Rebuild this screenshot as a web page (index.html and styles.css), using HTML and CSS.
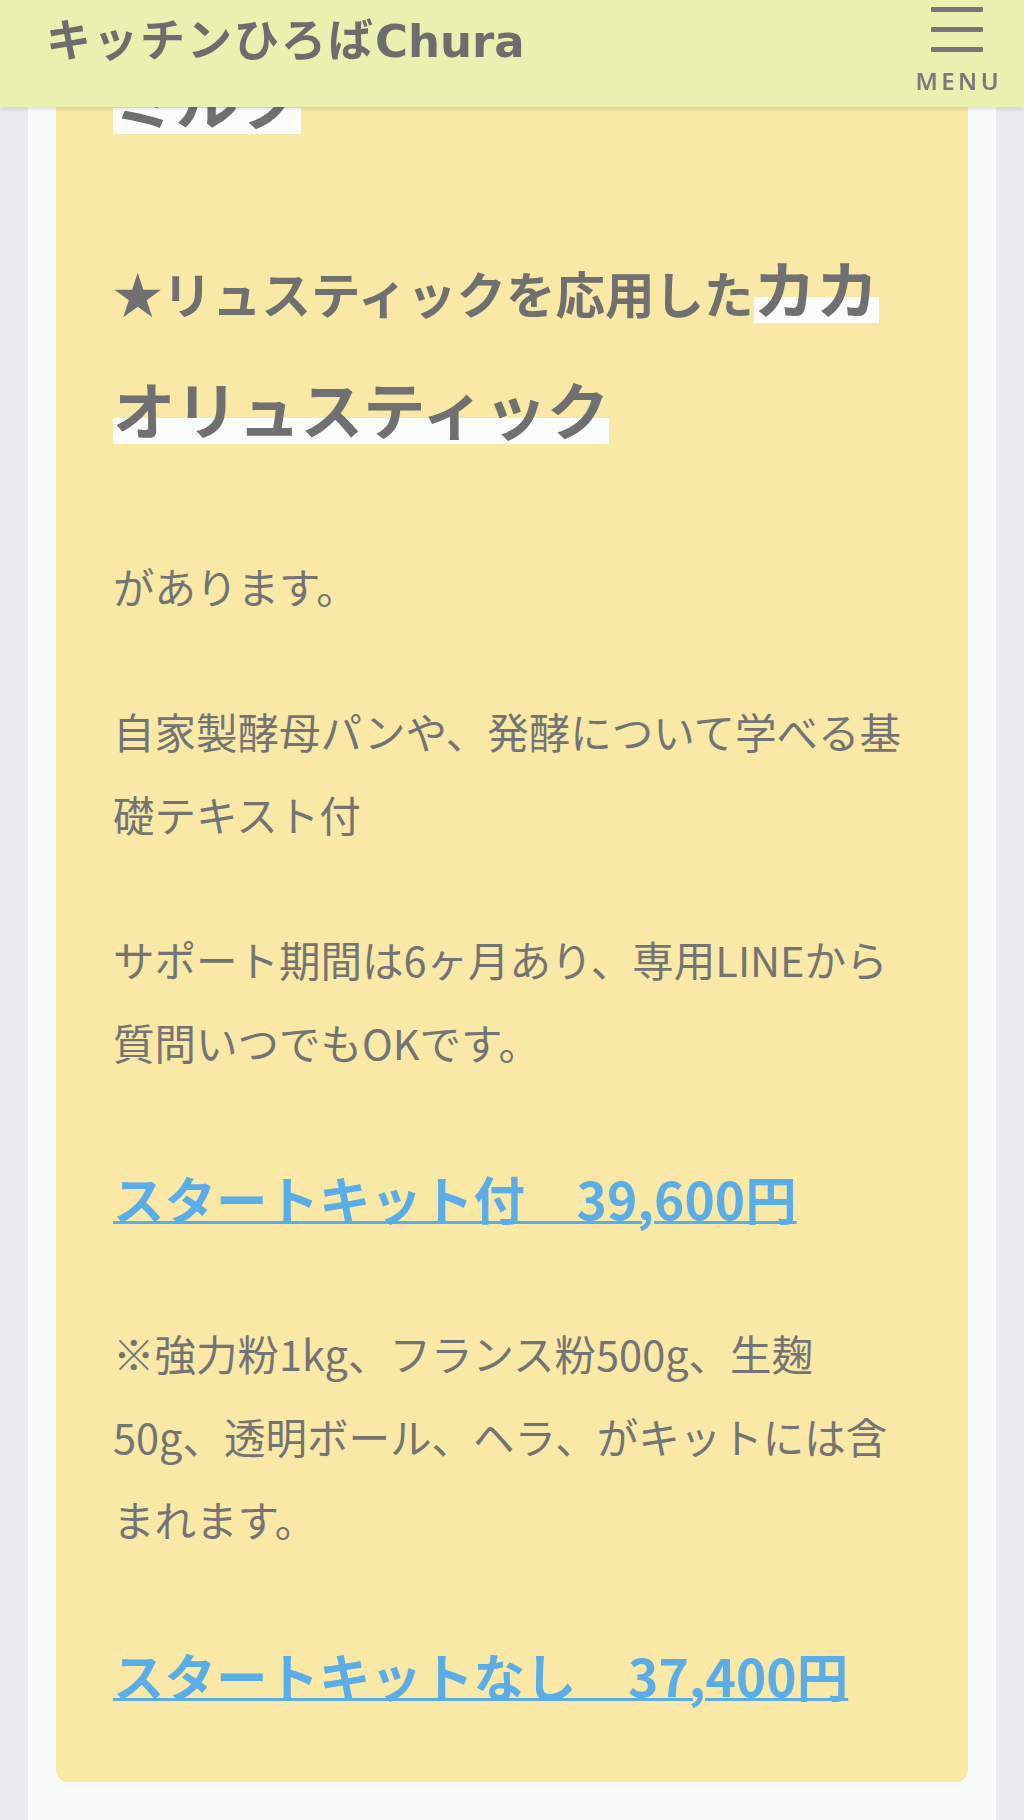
FILE: index.html
```html
<!DOCTYPE html>
<html lang="ja">
<head>
<meta charset="utf-8">
<title>キッチンひろばChura</title>
<link rel="stylesheet" href="styles.css">
</head>
<body>
<header class="site-header">
  <div class="logo">キッチンひろば<span class="logo-latin">Chura</span></div>
  <div class="menu">
    <span class="menu-bar"></span>
    <span class="menu-bar"></span>
    <span class="menu-bar"></span>
    <span class="menu-label">MENU</span>
  </div>
</header>
<main class="panel">
  <section class="card">
    <h3 class="item-title item-title-prev"><span class="marker">ミルク</span></h3>
    <h3 class="item-title item-title-main">★リュスティックを応用した<span class="marker">カカオリュスティック</span></h3>
    <p>があります。</p>
    <p>自家製酵母パンや、発酵について学べる基<br>礎テキスト付</p>
    <p>サポート期間は6ヶ月あり、専用LINEから<br>質問いつでもOKです。</p>
    <p class="price"><a href="#">スタートキット付　39,600円</a></p>
    <p>※強力粉1kg、フランス粉500g、生麹<br>50g、透明ボール、ヘラ、がキットには含<br>まれます。</p>
    <p class="price"><a href="#">スタートキットなし　37,400円</a></p>
  </section>
</main>
</body>
</html>
```

FILE: styles.css
```css
html, body {
  margin: 0;
  padding: 0;
}

body {
  background: #e9ebee;
  font-family: "Noto Sans CJK JP", sans-serif;
  color: #747474;
}

.site-header {
  position: fixed;
  top: 0;
  left: 0;
  right: 0;
  height: 107px;
  box-sizing: border-box;
  padding: 0 26px 0 46px;
  display: flex;
  justify-content: space-between;
  align-items: flex-start;
  background: #e9f0b0;
  box-shadow: 0 2px 4px rgba(0, 0, 0, 0.12);
  z-index: 10;
}

.logo {
  margin-top: 15px;
  font-size: 45px;
  line-height: 45px;
  letter-spacing: 2px;
  font-weight: 700;
  color: #6d6d6d;
  white-space: nowrap;
}

.logo-latin {
  font-family: "DejaVu Sans", sans-serif;
  letter-spacing: 0;
}

.menu {
  width: 82px;
  padding-top: 7px;
  display: flex;
  flex-direction: column;
  align-items: center;
}

.menu-bar {
  display: block;
  width: 52px;
  height: 5px;
  border-radius: 1px;
  background: #767676;
}

.menu-bar + .menu-bar {
  margin-top: 15px;
}

.menu-label {
  margin-top: 17px;
  margin-right: -3.5px;
  font-family: "Noto Sans", sans-serif;
  font-size: 24px;
  line-height: 24px;
  font-weight: 600;
  letter-spacing: 3.5px;
  color: #7a7a7a;
}

.panel {
  display: block;
  margin: 0 28px;
  padding: 0 28px;
  min-height: 1820px;
  background: #fafcfc;
}

.card {
  padding: 37px 57px 55px;
  border-radius: 12px;
  background: #f9e8a6;
}

.item-title {
  margin: 0;
  font-size: 49.5px;
  line-height: 1.97;
  font-weight: 700;
  color: #707070;
}

.item-title-prev {
  margin-bottom: 68px;
}

.item-title-main {
  margin-bottom: 77px;
}

.marker {
  font-size: 62.5px;
  line-height: 121px;
  background: linear-gradient(transparent 62%, #fbfcfc 62%, #fbfcfc 90%, transparent 90%);
}

.card p {
  margin: 0 0 62px;
  font-size: 41.5px;
  line-height: 2;
}

.card p:last-child {
  margin-bottom: 0;
}

.card .price {
  font-size: 51.5px;
  line-height: 104px;
  font-weight: 700;
}

.price a {
  color: #5aade6;
  text-decoration: underline;
  text-decoration-thickness: 3px;
  text-underline-offset: 1px;
}
```
